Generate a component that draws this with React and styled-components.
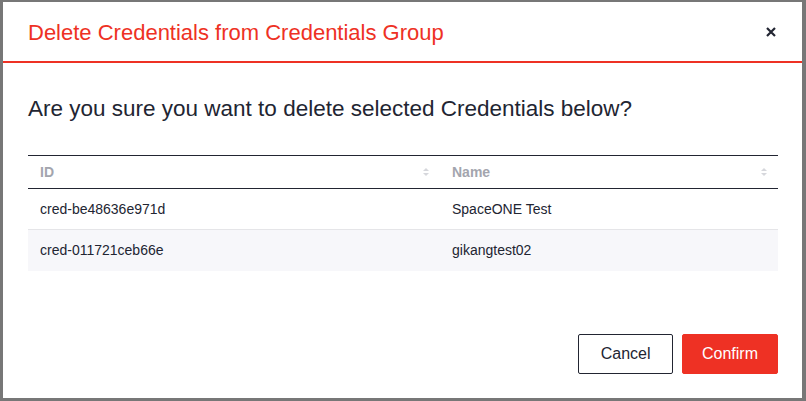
import styled, { createGlobalStyle } from "styled-components";

const Global = createGlobalStyle`
  html, body {
    margin: 0;
    padding: 0;
    background: #777777;
    font-family: "Liberation Sans", Arial, sans-serif;
  }
`;

const Backdrop = styled.div`
  width: 806px;
  height: 401px;
  padding: 2px 4px 3px 3px;
  box-sizing: border-box;
  display: flex;
`;

const Modal = styled.div`
  flex: 1;
  background: #fff;
  display: flex;
  flex-direction: column;
`;

const Header = styled.div`
  height: 59px;
  padding: 0 26px 0 25px;
  display: flex;
  align-items: center;
  justify-content: space-between;
  border-bottom: 2px solid #ee3124;
`;

const Title = styled.h2`
  margin: 0;
  padding-top: 2px;
  font-size: 22px;
  font-weight: 400;
  color: #ee3124;
`;

const Close = styled.button`
  border: none;
  background: none;
  padding: 0;
  display: flex;
  cursor: pointer;
`;

const Body = styled.div`
  flex: 1;
  padding: 0 24px 0 25px;
  display: flex;
  flex-direction: column;
`;

const Question = styled.p`
  margin: 33px 0 0;
  height: 59px;
  font-size: 22.5px;
  color: #222532;
`;

const Table = styled.table`
  width: 100%;
  border-collapse: collapse;
  font-size: 14px;
  color: #222532;
`;

const Th = styled.th`
  height: 32px;
  padding: 0 10px 0 12px;
  text-align: left;
  font-weight: 700;
  color: #a3a5ae;
  border-top: 1px solid #222532;
  border-bottom: 1px solid #222532;
  width: ${(p) => p.$width || "auto"};
`;

const ThInner = styled.div`
  display: flex;
  align-items: center;
  justify-content: space-between;
`;

const Tr = styled.tr`
  background: ${(p) => (p.$alt ? "#f7f7fa" : "#fff")};
`;

const Td = styled.td`
  height: 40px;
  padding: 0 12px;
  border-bottom: 1px solid ${(p) => (p.$last ? "transparent" : "#e5e5e8")};
`;

const Footer = styled.div`
  display: flex;
  justify-content: flex-end;
  gap: 9px;
  padding: 0 24px 24px 0;
`;

const Button = styled.button`
  height: 40px;
  padding: 0 ${(p) => (p.$primary ? "19px" : "21.5px")};
  font-family: inherit;
  font-size: 16px;
  border-radius: 2px;
  cursor: pointer;
  border: 1px solid ${(p) => (p.$primary ? "#ee3124" : "#222532")};
  background: ${(p) => (p.$primary ? "#ee3124" : "#fff")};
  color: ${(p) => (p.$primary ? "#fff" : "#222532")};
`;

const SortIcon = () => (
  <svg width="8" height="12" viewBox="0 0 8 12">
    <path d="M1 5 L4 2 L7 5 Z" fill="#d6d7dc" />
    <path d="M1 7 L4 10 L7 7 Z" fill="#d6d7dc" />
  </svg>
);

const rows = [
  { id: "cred-be48636e971d", name: "SpaceONE Test" },
  { id: "cred-011721ceb66e", name: "gikangtest02" },
];

export default function App() {
  return (
    <>
      <Global />
      <Backdrop>
        <Modal>
          <Header>
            <Title>Delete Credentials from Credentials Group</Title>
            <Close aria-label="close">
              <svg width="10" height="10" viewBox="0 0 10 10">
                <path d="M1 1 L9 9 M9 1 L1 9" stroke="#222532" strokeWidth="2.2" />
              </svg>
            </Close>
          </Header>
          <Body>
            <Question>Are you sure you want to delete selected Credentials below?</Question>
            <Table>
              <thead>
                <tr>
                  <Th $width="390px">
                    <ThInner>ID<SortIcon /></ThInner>
                  </Th>
                  <Th>
                    <ThInner>Name<SortIcon /></ThInner>
                  </Th>
                </tr>
              </thead>
              <tbody>
                {rows.map((r, i) => (
                  <Tr key={r.id} $alt={i % 2 === 1}>
                    <Td $last={i === rows.length - 1}>{r.id}</Td>
                    <Td $last={i === rows.length - 1}>{r.name}</Td>
                  </Tr>
                ))}
              </tbody>
            </Table>
          </Body>
          <Footer>
            <Button>Cancel</Button>
            <Button $primary>Confirm</Button>
          </Footer>
        </Modal>
      </Backdrop>
    </>
  );
}
